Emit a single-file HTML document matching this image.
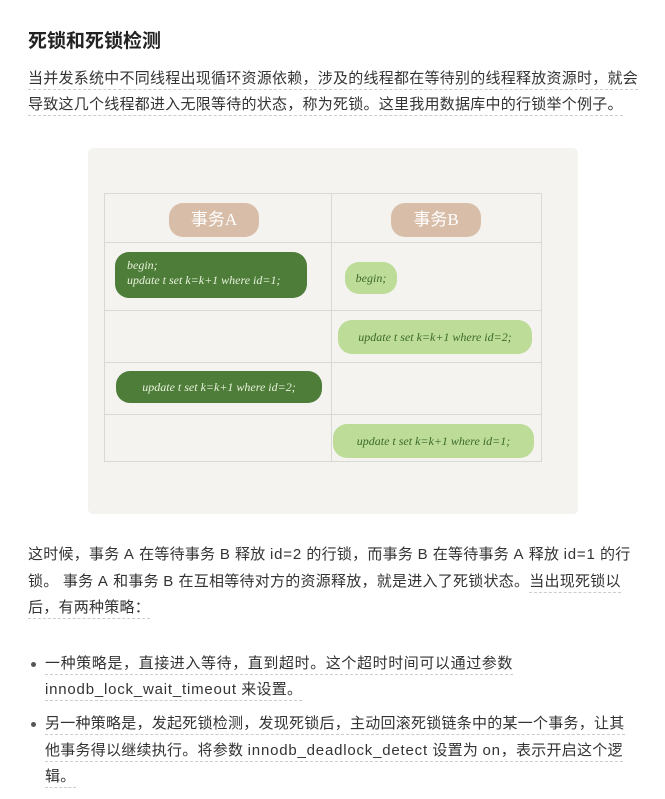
<!DOCTYPE html>
<html><head><meta charset="utf-8"><style>
body{margin:0;width:665px;height:799px;background:#fff;font-family:"Liberation Sans","Noto Sans CJK SC",sans-serif;color:#333;position:relative;overflow:hidden}
.t{position:absolute;left:28px;font-size:15px;white-space:nowrap;line-height:20px;letter-spacing:0.25px}
.l{letter-spacing:0.8px}
.u{border-bottom:1px dashed #ccc;padding-bottom:2px}
h1{position:absolute;left:28px;top:26px;margin:0;font-size:19px;font-weight:bold;color:#222;font-family:"Liberation Sans","Noto Sans CJK SC",sans-serif}
.img{position:absolute;left:88px;top:148px;width:490px;height:366px;background:#f4f3ef;border-radius:5px}
.tb{position:absolute;left:16px;top:45px;width:436px;height:267px;border:1px solid #d8d8d4}
.vl{position:absolute;left:226px;top:0;bottom:0;border-left:1px solid #d8d8d4}
.hl{position:absolute;left:0;right:0;border-top:1px solid #d8d8d4}
.p{position:absolute;border-radius:14px;font-family:"Liberation Serif","Noto Sans CJK SC",serif;font-style:italic;font-size:12px;white-space:nowrap;line-height:15px}
.tan{background:#d8bea8;color:#fff;font-size:17px;font-style:normal;text-align:center;line-height:34px}
.dk{background:#4e7d3a;color:#e8f2dc}
.lt{background:#bcdc98;color:#3c6a2a}
.b{position:absolute;left:31px;width:5px;height:5px;border-radius:50%;background:#555}
</style></head><body>
<h1>死锁和死锁检测</h1>
<div class="t" style="top:69px"><span class="u">当并发系统中不同线程出现循环资源依赖，涉及的线程都在等待别的线程释放资源时，就会</span></div>
<div class="t" style="top:95px"><span class="u">导致这几个线程都进入无限等待的状态，称为死锁。这里我用数据库中的行锁举个例子。</span></div>
<div class="img"><div class="tb">
<div class="vl"></div>
<div class="hl" style="top:48px"></div><div class="hl" style="top:116px"></div><div class="hl" style="top:168px"></div><div class="hl" style="top:220px"></div>
<div class="p tan" style="left:64px;top:9px;width:90px;height:34px">事务A</div>
<div class="p tan" style="left:286px;top:9px;width:90px;height:34px">事务B</div>
<div class="p dk" style="left:10px;top:58px;width:192px;height:46px"><div style="padding:6px 12px">begin;<br>update t set k=k+1 where id=1;</div></div>
<div class="p lt" style="left:240px;top:68px;width:52px;height:32px;line-height:32px;text-align:center">begin;</div>
<div class="p lt" style="left:233px;top:126px;width:194px;height:34px;line-height:34px;text-align:center">update t set k=k+1 where id=2;</div>
<div class="p dk" style="left:11px;top:177px;width:206px;height:32px;line-height:32px;text-align:center">update t set k=k+1 where id=2;</div>
<div class="p lt" style="left:228px;top:230px;width:201px;height:34px;line-height:34px;text-align:center">update t set k=k+1 where id=1;</div>
</div></div>
<div class="t" style="top:545px">这时候，事务 <span class="l">A</span> 在等待事务 <span class="l">B</span> 释放 <span class="l">id=2</span> 的行锁，而事务 <span class="l">B</span> 在等待事务 <span class="l">A</span> 释放 <span class="l">id=1</span> 的行</div>
<div class="t" style="top:572px">锁。 事务 <span class="l">A</span> 和事务 <span class="l">B</span> 在互相等待对方的资源释放，就是进入了死锁状态。<span class="u">当出现死锁以</span></div>
<div class="t" style="top:598px"><span class="u">后，有两种策略：</span></div>
<div class="b" style="top:662px"></div>
<div class="t" style="left:45px;top:654px;letter-spacing:0.6px"><span class="u">一种策略是，直接进入等待，直到超时。这个超时时间可以通过参数</span></div>
<div class="t" style="left:45px;top:680px"><span class="u"><span class="l">innodb_lock_wait_timeout</span> 来设置。</span></div>
<div class="b" style="top:722px"></div>
<div class="t" style="left:45px;top:714px"><span class="u">另一种策略是，发起死锁检测，发现死锁后，主动回滚死锁链条中的某一个事务，让其</span></div>
<div class="t" style="left:45px;top:741px"><span class="u">他事务得以继续执行。将参数 <span class="l">innodb_deadlock_detect</span> 设置为 <span class="l">on</span>，表示开启这个逻</span></div>
<div class="t" style="left:45px;top:767px"><span class="u">辑。</span></div>
</body></html>
